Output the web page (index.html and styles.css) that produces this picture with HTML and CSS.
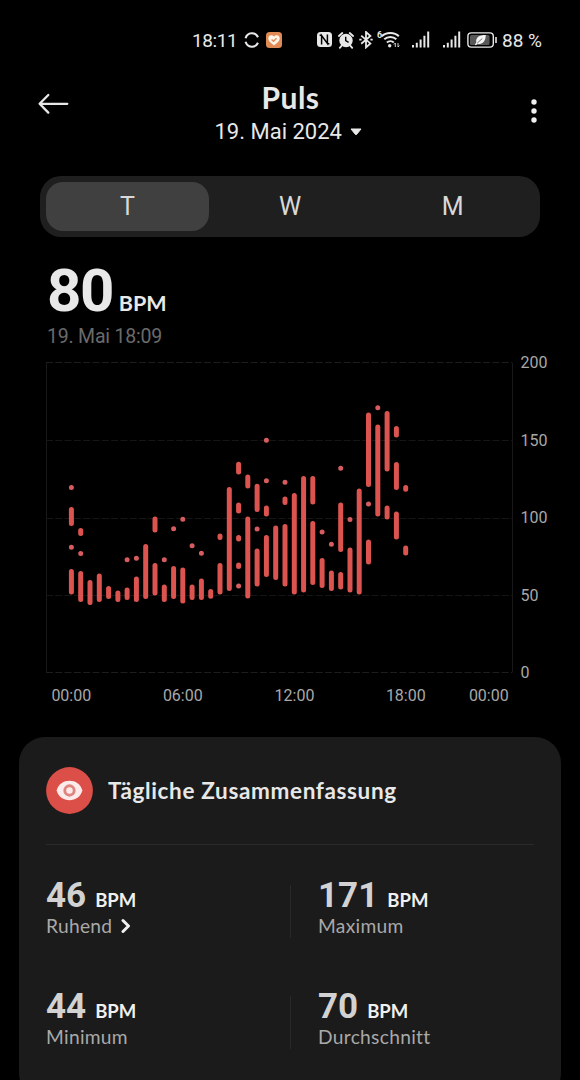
FILE: index.html
```html
<!DOCTYPE html>
<html lang="de">
<head>
    <meta charset="UTF-8">
    <meta name="viewport" content="width=device-width, initial-scale=1.0">
    <title>Puls</title>
    <link rel="stylesheet" href="styles.css">
</head>
<body>
    <div class="status-bar">
        <span class="clock">18:11</span>
        <svg class="icon-sync" width="16" height="18" viewBox="0 0 16 18" fill="none" stroke="#e8e8e8" stroke-width="2.1">
            <path d="M1.6 7.2A6.6 6.6 0 0 1 14 6.2M1.6 10.8A6.6 6.6 0 0 0 14 11.8"/>
        </svg>
        <svg class="icon-health" width="16" height="16" viewBox="0 0 16 16">
            <rect width="16" height="16" rx="3.5" fill="#e08a55"/>
            <path d="M8 13.4C4.6 11 2.3 9 2.3 6.3C2.3 3.2 6 2.2 8 4.6C10 2.2 13.7 3.2 13.7 6.3C13.7 9 11.4 11 8 13.4z" fill="#fff4e8"/>
            <path d="M5.6 7.5L7.5 9.3L10.6 6.2" fill="none" stroke="#e08a55" stroke-width="1.3"/>
        </svg>
        <svg class="icon-nfc" width="15" height="16" viewBox="0 0 15 16">
            <rect x="0" y="0" width="15" height="15" rx="3.5" fill="#e8e8e8"/>
            <path d="M4.6 12.6V3.6L10.4 11.4V2.4M4.6 3.2H2.6M10.4 11.8H12.4" fill="none" stroke="#000" stroke-width="1.5"/>
        </svg>
        <svg class="icon-alarm" width="16" height="17" viewBox="0 0 16 17">
            <circle cx="8" cy="8.5" r="6.7" fill="#e8e8e8"/>
            <path d="M.9 4L4.3 1M15.1 4L11.7 1M3.5 13.8L1.8 15.8M12.5 13.8L14.2 15.8" stroke="#e8e8e8" stroke-width="1.8" stroke-linecap="round"/>
            <path d="M7.7 4.7V8.7L10.6 10.3" fill="none" stroke="#000" stroke-width="1.4"/>
        </svg>
        <svg class="icon-bluetooth" width="14" height="18" viewBox="0 0 14 18" fill="none" stroke="#e8e8e8" stroke-width="1.8">
            <path d="M2.2 4.6L11.4 12.4L7 16.4V1L11.4 5L2.2 12.8"/>
            <path d="M.3 8.7H2.6M11.4 8.7H13.7"/>
        </svg>
        <svg class="icon-wifi" width="23" height="20" viewBox="0 0 23 20" fill="none" stroke="#e8e8e8" stroke-width="2">
            <text x="0" y="8" class="wifi-text" stroke="none">6</text>
            <path d="M4.8 6.2C8.8 1.9 17.8 1.9 21.8 6.2M7.3 9.3C10.5 6.1 16.2 6.1 19.3 9.3M9.9 12.5C11.8 10.7 14.9 10.7 16.8 12.5"/>
            <circle cx="12.7" cy="15.8" r="1.7" fill="#e8e8e8" stroke="none"/>
            <path d="M18.3 13V17M16.9 14.5L18.3 13M21 13V17M22.4 15.5L21 17" stroke-width=".9"/>
        </svg>
        <svg class="icon-signal" width="18" height="17" viewBox="0 0 18 17" fill="#e8e8e8">
            <path d="M0 14h2v2.5H0zM3.8 11.8h2v4.7h-2zM7.6 8.5h2v8h-2zM11.4 4.8h2v11.7h-2zM15.2 .5h2v16h-2z"/>
        </svg>
        <svg class="icon-signal second" width="18" height="17" viewBox="0 0 18 17" fill="#e8e8e8">
            <path d="M0 14h2v2.5H0zM3.8 11.8h2v4.7h-2zM7.6 8.5h2v8h-2zM11.4 4.8h2v11.7h-2zM15.2 .5h2v16h-2z"/>
        </svg>
        <svg class="icon-battery" width="31" height="16" viewBox="0 0 31 16">
            <rect x=".9" y=".9" width="25.4" height="14.2" rx="3.4" fill="none" stroke="#e8e8e8" stroke-width="1.4"/>
            <rect x="3" y="3" width="19.5" height="10" rx="1.5" fill="#585858"/>
            <path d="M18.8 3C12 3 8.5 5.5 9.3 10.4L7.8 12.8L9 13.3L10.4 11.7C15.5 13 18.6 9.4 18.8 3z" fill="#f4f4f4"/>
            <path d="M10.3 11L15.3 6.5" stroke="#585858" stroke-width=".9"/>
            <path d="M28.2 5H29.8V11H28.2z" fill="#e8e8e8"/>
        </svg>
        <span class="battery-text">88 %</span>
    </div>

    <div class="header">
        <svg class="back" width="32" height="24" viewBox="0 0 32 24" fill="none" stroke="#e8e8e8" stroke-width="2.3" stroke-linecap="round" stroke-linejoin="round">
            <path d="M30.3 11.8H3M11.3 3L2.6 11.8L11.3 20.6"/>
        </svg>
        <div class="heading">
            <h1>Puls</h1>
            <div class="date">
                <span>19. Mai 2024</span>
                <svg width="12" height="8" viewBox="0 0 12 8"><path d="M1 1H11L6.6 6.4Q6 7 5.4 6.4z" fill="#e8e8e8" stroke="#e8e8e8" stroke-linejoin="round"/></svg>
            </div>
        </div>
        <svg class="menu" width="6" height="24" viewBox="0 0 6 24" fill="#f0f0f0">
            <circle cx="3" cy="3" r="2.7"/>
            <circle cx="3" cy="12" r="2.7"/>
            <circle cx="3" cy="21" r="2.7"/>
        </svg>
    </div>

    <div class="tabs">
        <div class="tab active">T</div>
        <div class="tab">W</div>
        <div class="tab">M</div>
    </div>

    <div class="current">
        <div class="current-value"><span class="number">80</span><span class="unit">BPM</span></div>
        <div class="current-time">19. Mai 18:09</div>
    </div>

    <svg class="chart" width="580" height="360" viewBox="0 350 580 360">
        <!-- grid -->
        <g class="grid">
            <path d="M46.5 362.5V672.5M512.5 362.5V672.5"/>
            <path class="dashed outer" d="M46 362.5H512M46 672.5H512"/>
            <path class="dashed" d="M46 440.5H512M46 518.5H512M46 595.5H512"/>
        </g>
        <!-- heart rate ranges, one column per half hour -->
        <path class="ranges" d="M71.4 509.5V523.5M71.4 571.5V592
            M80.7 530.5V533.5M80.7 573.5V599.5
            M90 582.5V602.5
            M99.3 576V599.5
            M108.6 588.5V596.5
            M117.9 593V599.5
            M127.1 590V597.5
            M136.4 579V599.5
            M145.7 546.5V596.5
            M155 519V530M155 565.5V593
            M164.3 587V599.5
            M173.6 568.5V596.5
            M182.8 570V601
            M192.1 587V597.5
            M201.4 581V597.5
            M210.7 591.5V596.2
            M220 536V537.5M220 565.5V592
            M229.3 489.5V588.5
            M238.6 464.2V472M238.6 505V511M238.6 537.5V539M238.6 565V566.5
            M247.8 477V486M247.8 519V596
            M257.1 486.2V509.5M257.1 551V584
            M266.4 508V514M266.4 537.5V574.5
            M275.7 528V577.5
            M285 499V502.5M285 526.5V584
            M294.3 495.5V592
            M303.6 478.5V590
            M312.8 478.5V502M312.8 523.5V582.5
            M322.1 560.5V585.5
            M331.4 573V588.5
            M340.7 505V549.5M340.7 574.5V587
            M350 550V590
            M359.2 491V592
            M368.5 415V484.5M368.5 542V562
            M377.8 427V514
            M387.1 413.5V469M387.1 508V517
            M396.4 428.5V435M396.4 464.5V487.5M396.4 514V537
            M405.7 487.5V489.2M405.7 548V553"/>
        <!-- single readings -->
        <path class="dots" d="M71.4 487.5h0M71.4 547.3h0M80.7 553.5h0M127.1 559.7h0M136.4 558.3h0M164.3 559.7h0M173.6 528.7h0M182.8 519.3h0M192.1 545.7h0M201.4 553.3h0M238.6 586h0M257.1 529h0M266.4 440.3h0M266.4 480.7h0M285 482.3h0M322.1 532h0M331.4 544.3h0M340.7 468.3h0M350 519.5h0M368.5 504h0M377.8 407.8h0"/>
        <g class="axis">
            <text x="520.5" y="368">200</text>
            <text x="520.5" y="445.5">150</text>
            <text x="520.5" y="523">100</text>
            <text x="520.5" y="600.5">50</text>
            <text x="520.5" y="678">0</text>
        </g>
        <g class="axis hours">
            <text x="71.3" y="701.2">00:00</text>
            <text x="182.8" y="701.2">06:00</text>
            <text x="294.5" y="701.2">12:00</text>
            <text x="405.8" y="701.2">18:00</text>
            <text x="488.8" y="701.2">00:00</text>
        </g>
    </svg>

    <div class="card">
        <div class="card-header">
            <svg width="47" height="47" viewBox="0 0 47 47">
                <circle cx="23.5" cy="23.5" r="23.4" fill="#dc4e48"/>
                <path d="M10.6 23.5C12.5 17 17.5 13.8 23.5 13.8S34.5 17 36.4 23.5C34.5 30 29.5 33.2 23.5 33.2S12.5 30 10.6 23.5z" fill="#fcebea"/>
                <circle cx="23.5" cy="23.5" r="4.7" fill="none" stroke="#df8580" stroke-width="2.9"/>
            </svg>
            <h2>Tägliche Zusammenfassung</h2>
        </div>
        <div class="stats">
            <div class="stat">
                <div class="stat-value"><span class="number">46</span><span class="unit">BPM</span></div>
                <div class="stat-label">Ruhend
                    <svg width="11" height="15" viewBox="0 0 11 15" fill="none" stroke="#f0f0f0" stroke-width="3" stroke-linecap="round" stroke-linejoin="round"><path d="M3 2.5L8.5 8L3 13.5"/></svg>
                </div>
            </div>
            <div class="stat">
                <div class="stat-value"><span class="number">171</span><span class="unit">BPM</span></div>
                <div class="stat-label">Maximum</div>
            </div>
            <div class="stat">
                <div class="stat-value"><span class="number">44</span><span class="unit">BPM</span></div>
                <div class="stat-label">Minimum</div>
            </div>
            <div class="stat">
                <div class="stat-value"><span class="number">70</span><span class="unit">BPM</span></div>
                <div class="stat-label">Durchschnitt</div>
            </div>
        </div>
    </div>
</body>
</html>
```
FILE: styles.css
```css
* {
    box-sizing: border-box;
    margin: 0;
    padding: 0;
}

body {
    width: 580px;
    height: 1080px;
    overflow: hidden;
    background-color: #000;
    color: #e8e8e8;
    font-family: Roboto, sans-serif;
    font-variant-ligatures: none;
}

svg {
    display: block;
    flex-shrink: 0;
}

/* Status bar */
.status-bar {
    display: flex;
    align-items: center;
    height: 80px;
    padding-left: 192px;
    font-size: 19px;
    white-space: nowrap;
}

.clock {
    width: 52px;
    letter-spacing: -0.4px;
}

.icon-health {
    margin-left: 6px;
}

.icon-nfc {
    margin-left: 35px;
}

.icon-alarm {
    margin-left: 6px;
}

.icon-bluetooth {
    margin-left: 5px;
}

.icon-wifi {
    margin-left: 4px;
}

.wifi-text {
    font-size: 9px;
    font-weight: 700;
    fill: #e8e8e8;
}

.icon-signal {
    margin: 0 0 2px 12px;
}

.icon-signal.second {
    margin-left: 13px;
}

.icon-battery {
    margin-left: 6px;
}

.battery-text {
    margin-left: 4px;
}

/* Header */
.header {
    display: flex;
    justify-content: space-between;
    height: 96px;
    padding: 0 43px 0 37px;
}

.back {
    margin-top: 12px;
}

.heading {
    width: 152px;
    margin-right: 19px;
    text-align: center;
}

h1 {
    font-family: Lato, sans-serif;
    font-size: 30px;
    font-weight: 700;
    line-height: 34px;
    letter-spacing: 0.5px;
}

.date {
    display: flex;
    align-items: center;
    gap: 8px;
    font-size: 22px;
    line-height: 36px;
    white-space: nowrap;
}

.menu {
    margin-top: 19px;
}

/* Tabs */
.tabs {
    display: flex;
    width: 500px;
    height: 61px;
    margin-left: 40px;
    padding: 6px;
    border-radius: 21px;
    background-color: #1f1f1f;
}

.tab {
    flex: 1;
    border-radius: 17px;
    color: #d8d8d8;
    font-size: 25px;
    line-height: 50px;
    text-align: center;
}

.tab.active {
    background-color: #404040;
}

/* Current value */
.current {
    height: 113px;
    padding: 21px 0 0 47px;
}

.current-value {
    height: 66px;
    line-height: 66px;
}

.current-value .number {
    font-size: 60px;
    font-weight: 700;
    letter-spacing: -1.5px;
}

.unit {
    font-family: Lato, sans-serif;
    font-weight: 700;
}

.current-value .unit {
    margin-left: 6px;
    font-size: 21.5px;
}

.current-time {
    color: #6a6a6a;
    font-size: 19.5px;
    line-height: 26px;
    letter-spacing: -0.2px;
}

/* Chart */
.grid path {
    fill: none;
    stroke: #191919;
}

.grid .dashed {
    stroke: #151515;
    stroke-dasharray: 7 2.3;
}

.grid .outer {
    stroke: #1d1d1d;
}

.ranges {
    fill: none;
    stroke: #dc5450;
    stroke-width: 5;
    stroke-linecap: round;
}

.dots {
    stroke: #d75c60;
    stroke-width: 5;
    stroke-linecap: round;
}

.axis {
    fill: #a8a8a8;
    font-size: 16px;
}

.hours {
    text-anchor: middle;
}

/* Summary */
.card {
    width: 542px;
    height: 362px;
    margin: 27px 0 0 19px;
    padding: 0 27px;
    border-radius: 26px;
    background-color: #1b1b1b;
}

.card-header {
    display: flex;
    align-items: center;
    gap: 15px;
    height: 108px;
    border-bottom: 1px solid #2b2b2b;
}

h2 {
    font-family: Lato, sans-serif;
    font-size: 22.5px;
    font-weight: 700;
    letter-spacing: 0.65px;
}

.stats {
    display: grid;
    grid-template-columns: 1fr 1fr;
    row-gap: 58px;
    padding-top: 40px;
}

.stat {
    height: 53px;
}

.stat:nth-child(even) {
    padding-left: 27px;
    border-left: 1px solid #292929;
}

.stat-value {
    height: 28px;
    line-height: 22px;
}

.stat-value .number {
    color: #d2d2d2;
    font-size: 35px;
    font-weight: 700;
}

.stat-value .unit {
    margin-left: 9px;
    color: #f0f0f0;
    font-size: 18.5px;
}

.stat-label {
    display: flex;
    gap: 8px;
    align-items: center;
    color: #a9a9a9;
    font-family: Lato, sans-serif;
    font-size: 19.2px;
    line-height: 25px;
    letter-spacing: 0.3px;
}
```
